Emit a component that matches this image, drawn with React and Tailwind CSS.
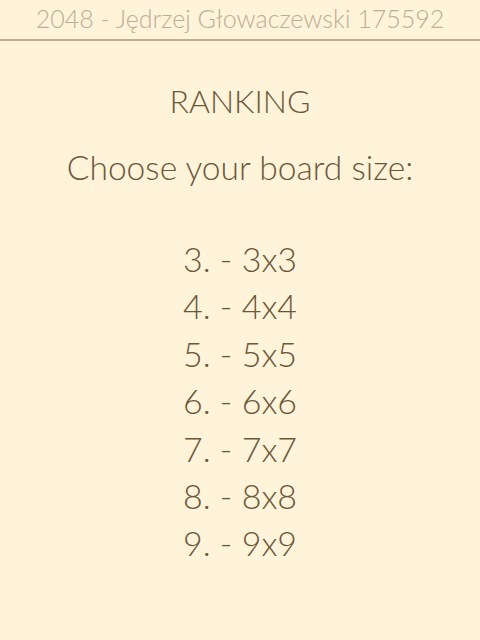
export default function App() {
  const sizes = [3, 4, 5, 6, 7, 8, 9];

  return (
    <div className="min-h-[640px] w-full bg-[#fff3d9] font-['Lato','Open_Sans',sans-serif] font-light text-[#6b5839]">
      {/* Nagłówek */}
      <div className="h-[41px] border-b-2 border-[#bcae91] text-center text-[25px] leading-[37px] text-[#bbae94]">
        2048 - Jędrzej Głowaczewski 175592
      </div>

      <div className="flex flex-col items-center pt-[38px]">
        <h1 className="text-[32px] leading-[44px]">RANKING</h1>
        <h2 className="mt-[22px] text-[33.6px] leading-[44px]">
          Choose your board size:
        </h2>

        <ul className="mt-[46px] flex flex-col items-center">
          {sizes.map((n) => (
            <li key={n} className="text-[34px] leading-[47.4px]">
              {n}. - {n}x{n}
            </li>
          ))}
        </ul>
      </div>
    </div>
  );
}
